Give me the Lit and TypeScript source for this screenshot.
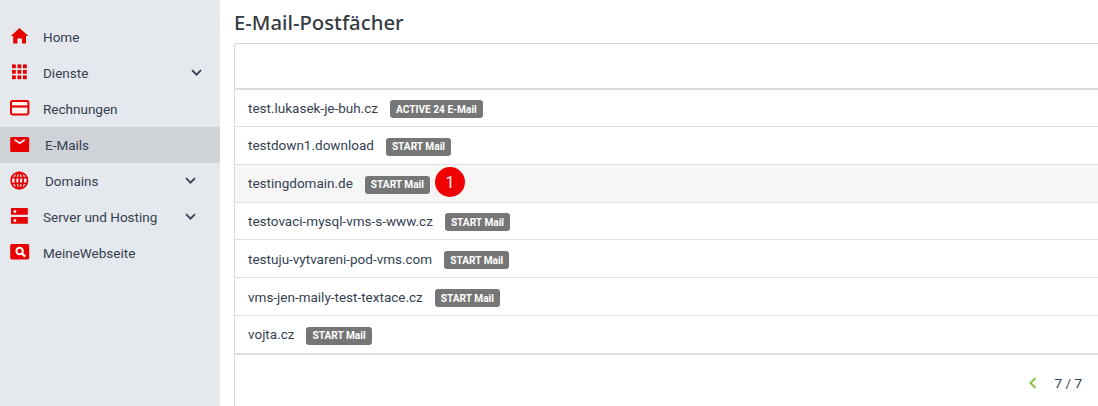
import { LitElement, html, css, svg } from "lit";
import { customElement } from "lit/decorators.js";

const icons: Record<string, unknown> = {
  home: svg`<path d="M9.5 0 L18.4 8 H16 V15.6 H12 V10.4 H7.4 V15.6 H3.2 V8 H0.8 Z" fill="#e60000"/>`,
  grid: svg`<g fill="#e60000">${[0.4, 5.9, 11.4].flatMap((y) =>
    [2, 7.5, 13].map((x) => svg`<rect x="${x}" y="${y}" width="3.8" height="3.8"/>`)
  )}</g>`,
  card: svg`<rect x="1" y="1" width="17.4" height="13.4" rx="1.4" fill="#fdf3f3" stroke="#e60000" stroke-width="2"/><rect x="1" y="5.4" width="17" height="2.2" fill="#e60000"/>`,
  mail: svg`<rect x="0.2" y="1" width="19" height="15" rx="1.5" fill="#e60000"/><path d="M4.6 3.8 L9.7 7.2 L14.8 3.8" fill="none" stroke="#fbe3e3" stroke-width="1.7"/>`,
  globe: svg`<g fill="none" stroke="#e60000" stroke-width="1.7"><circle cx="9.3" cy="8.5" r="8.2"/><ellipse cx="9.3" cy="8.5" rx="3.9" ry="8.2"/><path d="M9.3 0.3 V16.7 M1.6 5.7 H17 M1.6 11.3 H17"/></g>`,
  server: svg`<path fill-rule="evenodd" fill="#e60000" d="M1 0 H17.8 V6.7 H1 Z M4.9 1.9 a1.5 1.5 0 1 0 .01 0 Z M1 9 H17.8 V15.7 H1 Z M4.9 10.9 a1.5 1.5 0 1 0 .01 0 Z"/>`,
  site: svg`<rect x="0.2" y="0" width="19" height="15.4" rx="1.6" fill="#e60000"/><circle cx="9.6" cy="7" r="3.2" fill="none" stroke="#fff" stroke-width="2"/><path d="M12 9.4 L15.2 12.6" stroke="#fff" stroke-width="2.2"/>`,
};

const nav = [
  { label: "Home", icon: "home" },
  { label: "Dienste", icon: "grid", chevron: "far" },
  { label: "Rechnungen", icon: "card" },
  { label: "E-Mails", icon: "mail", active: true, wide: true },
  { label: "Domains", icon: "globe", chevron: "near", wide: true },
  { label: "Server und Hosting", icon: "server", chevron: "near" },
  { label: "MeineWebseite", icon: "site" },
];

const rows = [
  { name: "test.lukasek-je-buh.cz", tag: "ACTIVE 24 E-Mail" },
  { name: "testdown1.download", tag: "START Mail" },
  { name: "testingdomain.de", tag: "START Mail", hover: true, badge: "1" },
  { name: "testovaci-mysql-vms-s-www.cz", tag: "START Mail" },
  { name: "testuju-vytvareni-pod-vms.com", tag: "START Mail" },
  { name: "vms-jen-maily-test-textace.cz", tag: "START Mail" },
  { name: "vojta.cz", tag: "START Mail" },
];

@customElement("app-root")
export class AppRoot extends LitElement {
  static styles = css`
    :host {
      display: grid;
      grid-template-columns: 220px 1fr;
      height: 406px;
      overflow: hidden;
      font-family: Roboto, "Liberation Sans", sans-serif;
      color: #343a40;
      background: #fff;
    }
    .side {
      background: #e5e8ec;
      padding-top: 19px;
    }
    .item {
      height: 36px;
      display: flex;
      align-items: center;
      padding-left: 10px;
      font-size: 13.5px;
      font-weight: 400;
      color: #343f52;
    }
    .item.active {
      background: #cfd2d7;
    }
    .ico {
      width: 20px;
      height: 18px;
      margin-right: 13px;
      flex: none;
      overflow: visible;
    }
    .item.wide .ico {
      margin-right: 15px;
    }
    .chev {
      margin-left: auto;
      width: 11px;
      height: 8px;
      margin-top: -1px;
    }
    .chev.far {
      margin-right: 18px;
    }
    .chev.near {
      margin-right: 24px;
    }
    .main {
      padding: 0 0 0 14px;
      min-width: 0;
    }
    h1 {
      margin: 0;
      height: 43px;
      font-family: "Noto Sans", sans-serif;
      font-size: 20.3px;
      font-weight: 500;
      line-height: 44px;
      color: #343a40;
    }
    .panel {
      border: 1px solid #d9d9d9;
      border-right: 0;
      border-bottom: 0;
      border-radius: 3px 0 0 0;
    }
    .head {
      height: 44px;
    }
    .row {
      box-sizing: border-box;
      height: 37.85px;
      border-top: 1px solid #e0e0e0;
      display: flex;
      align-items: center;
      padding-left: 13px;
      font-size: 13.5px;
      color: #343f52;
    }
    .head + .row {
      border-top: 2px solid #dcdcdc;
    }
    .row.hover {
      background: #f6f6f6;
    }
    .tag {
      margin-left: 12px;
      height: 18px;
      padding: 0 6px;
      display: flex;
      align-items: center;
      border-radius: 3px;
      background: #767676;
      color: #fff;
      font-size: 10.15px;
      font-weight: 700;
      margin-top: 3px;
    }
    .badge {
      width: 30px;
      height: 30px;
      border-radius: 50%;
      background: #f00000;
      color: #fff;
      font-size: 16px;
      display: flex;
      align-items: center;
      justify-content: center;
      margin-left: 5px;
      margin-top: -2px;
    }
    .foot {
      border-top: 2px solid #dedede;
      display: flex;
      justify-content: flex-end;
      align-items: center;
      height: 56px;
      padding-right: 16px;
      font-size: 13.5px;
      color: #343f52;
      margin-left: -1px;
    }
    .prev {
      width: 8px;
      height: 12px;
      margin-right: 18px;
    }
  `;

  render() {
    return html`
      <nav class="side">
        ${nav.map(
          (n) => html`
            <div class="item ${n.active ? "active" : ""} ${n.wide ? "wide" : ""}">
              <svg class="ico" viewBox="0 0 20 18">${icons[n.icon]}</svg>
              <span>${n.label}</span>
              ${n.chevron
                ? html`<svg class="chev ${n.chevron}" viewBox="0 0 11 8"><path d="M1 1.2 L5.5 5.7 L10 1.2" fill="none" stroke="#343f52" stroke-width="1.7"/></svg>`
                : ""}
            </div>
          `
        )}
      </nav>
      <main class="main">
        <h1>E-Mail-Postfächer</h1>
        <div class="panel">
          <div class="head"></div>
          ${rows.map(
            (r) => html`
              <div class="row ${r.hover ? "hover" : ""}">
                <span>${r.name}</span>
                <span class="tag">${r.tag}</span>
                ${r.badge ? html`<span class="badge">${r.badge}</span>` : ""}
              </div>
            `
          )}
          <div class="foot">
            <svg class="prev" viewBox="0 0 8 12"><path d="M6.5 1 L1.5 6 L6.5 11" fill="none" stroke="#84c341" stroke-width="2"/></svg>
            <span>7 / 7</span>
          </div>
        </div>
      </main>
    `;
  }
}
